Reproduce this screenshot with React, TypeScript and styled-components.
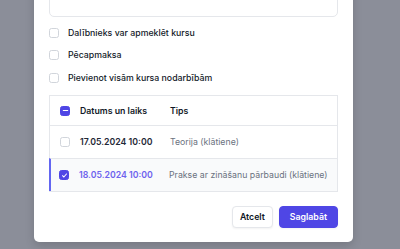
import styled, { createGlobalStyle } from 'styled-components';

const GlobalStyle = createGlobalStyle`
  html, body {
    margin: 0;
    padding: 0;
    background: #8b8e99;
    font-family: Inter, "Liberation Sans", sans-serif;
  }
`;

const Backdrop = styled.div`
  height: 249px;
  overflow: hidden;
  display: flex;
  flex-direction: column;
  justify-content: flex-end;
  padding: 0 47px 7px 34px;
  box-sizing: border-box;
`;

const Modal = styled.div`
  background: #fff;
  border-radius: 0 0 5px 5px;
  padding: 0 15px 14px 15px;
  display: flex;
  flex-direction: column;
  box-shadow: 0 4px 10px rgba(0, 0, 0, 0.15);
`;

const TextArea = styled.div`
  height: 60px;
  border: 1px solid #e5e7eb;
  border-radius: 5px;
  margin-bottom: 5px;
`;

const OptionRow = styled.label`
  display: flex;
  align-items: center;
  gap: 9px;
  height: 22.5px;
  font-size: 8.75px;
  font-weight: 500;
  color: #111827;
`;

const Box = styled.span<{ $checked?: boolean; $mixed?: boolean }>`
  width: 10px;
  height: 10px;
  flex: none;
  box-sizing: border-box;
  border-radius: 2.5px;
  border: 1px solid ${(p) => (p.$checked || p.$mixed ? '#4f46e5' : '#d1d5db')};
  background: ${(p) => (p.$checked || p.$mixed ? '#4f46e5' : '#fff')};
  display: flex;
  align-items: center;
  justify-content: center;
`;

const Table = styled.div`
  margin-top: 6px;
  border: 1px solid #e5e7eb;
  display: flex;
  flex-direction: column;
`;

const Row = styled.div<{ $head?: boolean; $selected?: boolean }>`
  display: grid;
  grid-template-columns: 20px 90px 1fr;
  align-items: center;
  height: ${(p) => (p.$head ? '29px' : '32px')};
  padding-left: ${(p) => (p.$selected ? '8px' : '10px')};
  border-left: ${(p) => (p.$selected ? '2px solid #6366f1' : 'none')};
  background: ${(p) => (p.$selected ? '#f9fafb' : '#fff')};
  border-top: ${(p) => (p.$head ? 'none' : '1px solid #e5e7eb')};
  font-size: 8.75px;
  margin-left: ${(p) => (p.$selected ? '-1px' : '0')};
`;

const Cell = styled.span<{ $tone?: 'head' | 'date' | 'accent' | 'muted' }>`
  font-weight: ${(p) => (p.$tone === 'muted' ? 400 : 600)};
  color: ${(p) =>
    p.$tone === 'accent'
      ? '#6d62ee'
      : p.$tone === 'muted'
      ? '#6b7280'
      : p.$tone === 'head'
      ? '#111827'
      : '#1f2937'};
`;

const Footer = styled.div`
  display: flex;
  justify-content: flex-end;
  gap: 6px;
  margin-top: 14px;
`;

const Button = styled.button<{ $primary?: boolean }>`
  height: 22px;
  padding: 0 ${(p) => (p.$primary ? '10px' : '7px')};
  border-radius: 4px;
  font-family: inherit;
  font-size: 8.75px;
  font-weight: 600;
  border: 1px solid ${(p) => (p.$primary ? '#4f46e5' : '#e5e7eb')};
  background: ${(p) => (p.$primary ? '#4f46e5' : '#fff')};
  color: ${(p) => (p.$primary ? '#fff' : '#111827')};
  box-shadow: 0 1px 2px rgba(0, 0, 0, 0.05);
`;

const Check = () => (
  <svg width="7" height="7" viewBox="0 0 16 16" fill="none">
    <path d="M3.5 8.5l3 3 6-7" stroke="#fff" strokeWidth="2.4" strokeLinecap="round" strokeLinejoin="round" />
  </svg>
);

const Dash = () => (
  <svg width="7" height="7" viewBox="0 0 16 16" fill="none">
    <path d="M3 8h10" stroke="#fff" strokeWidth="2.6" strokeLinecap="round" />
  </svg>
);

const options = ['Dalībnieks var apmeklēt kursu', 'Pēcapmaksa', 'Pievienot visām kursa nodarbībām'];

const sessions = [
  { date: '17.05.2024 10:00', type: 'Teorija (klātiene)', selected: false },
  { date: '18.05.2024 10:00', type: 'Prakse ar zināšanu pārbaudi (klātiene)', selected: true },
];

export default function App() {
  return (
    <>
      <GlobalStyle />
      <Backdrop>
        <Modal>
          <TextArea />
          {options.map((o) => (
            <OptionRow key={o}>
              <Box />
              {o}
            </OptionRow>
          ))}
          <Table>
            <Row $head>
              <Box $mixed>
                <Dash />
              </Box>
              <Cell $tone="head">Datums un laiks</Cell>
              <Cell $tone="head">Tips</Cell>
            </Row>
            {sessions.map((s) => (
              <Row key={s.date} $selected={s.selected}>
                <Box $checked={s.selected}>{s.selected && <Check />}</Box>
                <Cell $tone={s.selected ? 'accent' : 'date'}>{s.date}</Cell>
                <Cell $tone="muted">{s.type}</Cell>
              </Row>
            ))}
          </Table>
          <Footer>
            <Button>Atcelt</Button>
            <Button $primary>Saglabāt</Button>
          </Footer>
        </Modal>
      </Backdrop>
    </>
  );
}
